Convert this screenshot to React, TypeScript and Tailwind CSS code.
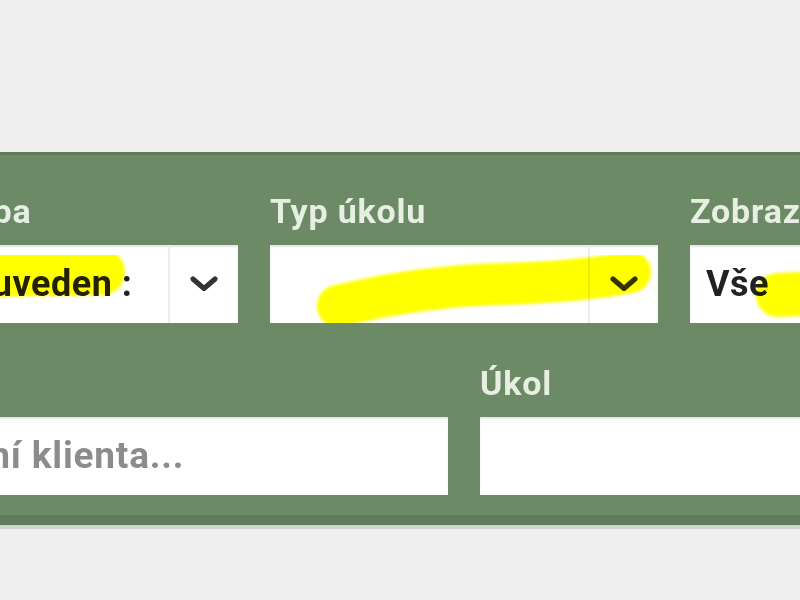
import React from 'react';

const font = { fontFamily: 'Roboto, "Liberation Sans", sans-serif' };

function Chevron() {
  return (
    <svg width="30" height="16" viewBox="0 0 30 16" fill="none">
      <path d="M4 3 L15 12.5 L26 3" stroke="#333" strokeWidth="5" strokeLinecap="round" strokeLinejoin="round" />
    </svg>
  );
}

function Label({ children }: { children: React.ReactNode }) {
  return (
    <div className="mb-[14px] h-[40px] whitespace-nowrap text-[34px] leading-[40px] font-bold tracking-[0.8px] text-[#e6efe2]">
      {children}
    </div>
  );
}

function Select({ label, value }: { label: string; value?: string }) {
  return (
    <div className="flex flex-col">
      <Label>{label}</Label>
      <div className="flex h-[78px] bg-white shadow-[inset_0_2px_2px_rgba(0,0,0,0.1)]">
        <div className="flex flex-1 items-center overflow-hidden whitespace-nowrap px-4 text-[36px] font-bold tracking-[0.5px] text-[#222]">
          {value}
        </div>
        <div className="flex w-[70px] items-center justify-center border-l-2 border-[#ececec]">
          <Chevron />
        </div>
      </div>
    </div>
  );
}

function Input({ label, placeholder }: { label: string; placeholder?: string }) {
  return (
    <div className="flex flex-col">
      <Label>{label}</Label>
      <div className="flex h-[78px] items-center overflow-hidden whitespace-nowrap bg-white px-4 text-[37px] font-bold tracking-[0.8px] text-[#8c8c8c] shadow-[inset_0_2px_2px_rgba(0,0,0,0.1)]">
        {placeholder}
      </div>
    </div>
  );
}

export default function App() {
  return (
    <div className="relative h-[600px] w-[800px] overflow-hidden bg-[#efefef]" style={font}>
      <div className="h-[152px]" />

      {/* filtr */}
      <div className="overflow-hidden border-t-[3px] border-b-[10px] border-[#5f7b59] bg-[#6c8a66]">
        <div className="ml-[-150px] w-[1228px] pt-[36px] pb-[20px]">
          <div className="flex gap-8 pl-[80px]">
            <div className="w-[308px]">
              <Select label="Osoba" value="Neuveden :" />
            </div>
            <div className="w-[388px]">
              <Select label="Typ úkolu" />
            </div>
            <div className="w-[388px]">
              <Select label="Zobrazit" value="Vše" />
            </div>
          </div>
          <div className="ml-[-16px] mt-[40px] flex gap-8">
            <div className="w-[614px] shrink-0">
              <Input label="Klient" placeholder="Vyhledání klienta..." />
            </div>
            <div className="w-[598px] shrink-0">
              <Input label="Úkol" />
            </div>
          </div>
        </div>
      </div>
      <div className="h-[4px] bg-[#cdd5cb]" />

      {/* zvýraznění */}
      <svg className="pointer-events-none absolute left-0 top-0 mix-blend-multiply" width="800" height="600">
        <defs>
          <filter id="soft" x="-20%" y="-50%" width="140%" height="200%">
            <feGaussianBlur stdDeviation="1.5" />
          </filter>
        </defs>
        <g stroke="#ffff00" strokeLinecap="round" fill="none" filter="url(#soft)">
          <path d="M-20 274 L102 272" strokeWidth="46" />
          <path d="M338 306 Q420 286 500 284 T630 272" strokeWidth="42" />
          <path d="M778 295 L830 292" strokeWidth="44" />
        </g>
      </svg>
    </div>
  );
}
